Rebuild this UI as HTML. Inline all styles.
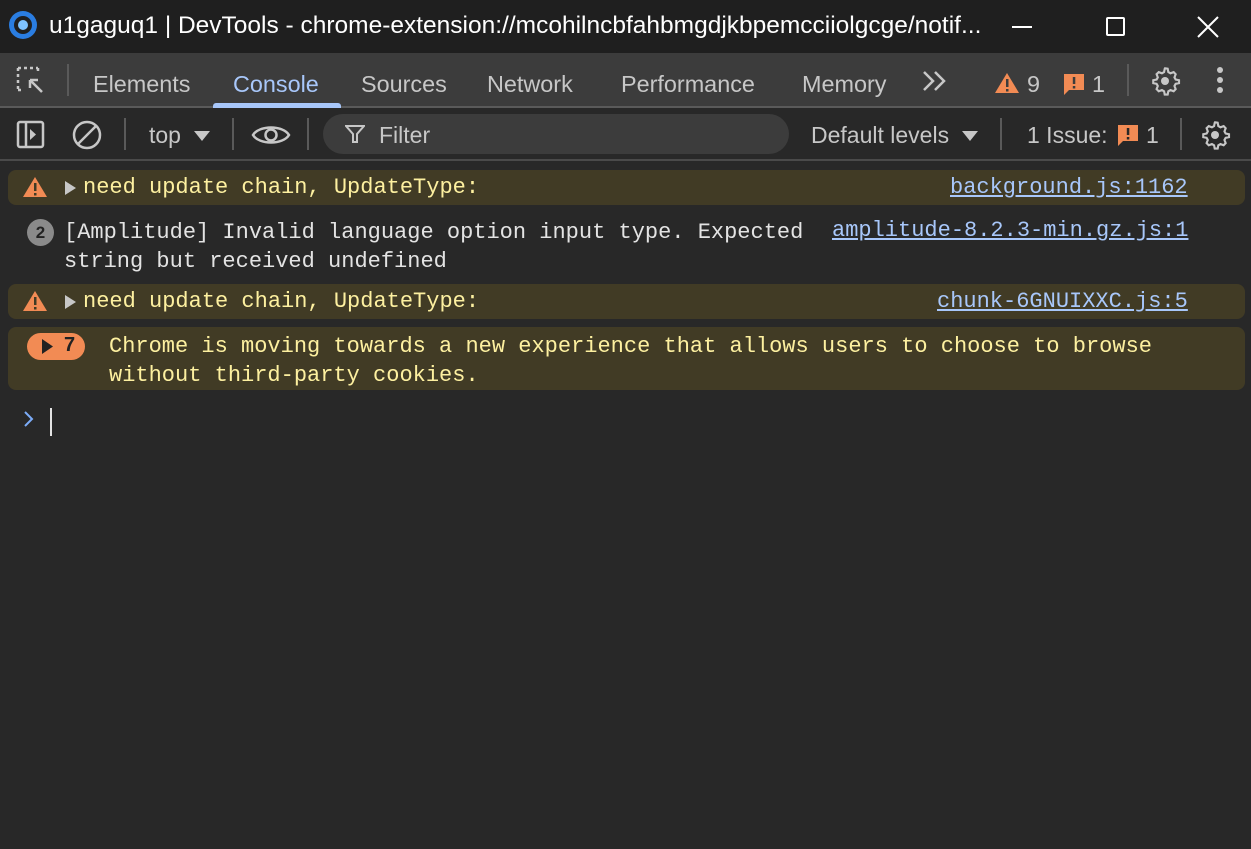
<!DOCTYPE html>
<html><head><style>
*{margin:0;padding:0;box-sizing:border-box}
body{width:1251px;height:849px;background:#282828;font-family:"Liberation Sans",sans-serif;color:#e3e3e3;position:relative;overflow:hidden}
.abs{position:absolute}
.title{top:0;left:0;width:1251px;height:53px;background:#1f1f1f}
.tabs{top:53px;left:0;width:1251px;height:55px;background:#3c3c3c;border-bottom:2px solid #5a5a5a}
.tb{top:108px;left:0;width:1251px;height:53px;background:#282828;border-bottom:2px solid #4a4a4a}
.t{font-size:23.4px;color:#c7c7c7;top:71px}
.mono{font-family:"Liberation Mono",monospace;font-size:22px;white-space:pre}
.row{left:8px;width:1237px;background:#413b25;border-radius:8px}
.y{color:#fdf0a0}
.lnk{color:#a8c7fa;text-decoration:underline;font-family:"Liberation Mono",monospace;font-size:22px}
.sep{width:2px;background:#5a5a5a}
.tt{font-size:23px;color:#c7c7c7;top:122px}
</style></head><body>
<div class="abs title"></div>
<svg class="abs" style="left:8px;top:10px" width="30" height="30" viewBox="0 0 30 30"><circle cx="15" cy="15" r="14" fill="#2a7de1"/><circle cx="15" cy="15" r="9" fill="#1f1f1f"/><circle cx="15" cy="15" r="5" fill="#7fc3ff"/></svg>
<div class="abs" style="left:49px;top:12px;font-size:24.5px;color:#fff;white-space:nowrap">u1gaguq1 | DevTools - chrome-extension://mcohilncbfahbmgdjkbpemcciiolgcge/notif...</div>
<div class="abs" style="left:1012px;top:26px;width:20px;height:2px;background:#fff"></div>
<div class="abs" style="left:1106px;top:17px;width:19px;height:19px;border:2px solid #fff;border-radius:2px"></div>
<svg class="abs" style="left:1197px;top:16px" width="22" height="22"><path d="M1 1L21 21M21 1L1 21" stroke="#fff" stroke-width="2"/></svg>

<div class="abs tabs"></div>
<svg class="abs" style="left:16px;top:66px" width="30" height="30" viewBox="0 0 30 30"><path d="M2 2h20M2 2v22M2 24h6M22 2v6" stroke="#c7c7c7" stroke-width="2.5" stroke-dasharray="3 3" fill="none"/><path d="M14 14l12 12M14 14h8M14 14v8" stroke="#c7c7c7" stroke-width="2.5" fill="none"/></svg>
<div class="abs sep" style="left:67px;top:64px;height:32px"></div>
<div class="abs t" style="left:93px">Elements</div>
<div class="abs t" style="left:233px;color:#a8c7fa">Console</div>
<div class="abs" style="left:213px;top:103px;width:128px;height:5px;background:#a8c7fa;border-radius:3px 3px 0 0"></div>
<div class="abs t" style="left:361px">Sources</div>
<div class="abs t" style="left:487px">Network</div>
<div class="abs t" style="left:621px">Performance</div>
<div class="abs t" style="left:802px">Memory</div>
<svg class="abs" style="left:922px;top:70px" width="26" height="22"><path d="M2 2l9 9-9 9M13 2l9 9-9 9" stroke="#c7c7c7" stroke-width="2.5" fill="none"/></svg>
<svg class="abs" style="left:994px;top:72px" width="26" height="22"><path d="M13 1L25 21H1z" fill="#f28b54"/><rect x="12" y="7" width="2.5" height="8" fill="#3c3c3c"/><rect x="12" y="17" width="2.5" height="2.5" fill="#3c3c3c"/></svg>
<div class="abs t" style="left:1027px">9</div>
<svg class="abs" style="left:1063px;top:73px" width="22" height="22"><path d="M1 1h20v16H6l-5 5z" fill="#f28b54"/><rect x="9.8" y="4" width="2.5" height="7" fill="#3c3c3c"/><rect x="9.8" y="13" width="2.5" height="2.5" fill="#3c3c3c"/></svg>
<div class="abs t" style="left:1092px">1</div>
<div class="abs sep" style="left:1127px;top:64px;height:32px"></div>
<svg class="abs" style="left:1149px;top:65px" width="32" height="32" viewBox="0 0 24 24"><path d="M12 2.5l2 .3.5 2.5 1.6.9 2.4-.9 1.5 1.6-.9 2.4.9 1.6 2.5.5v2.2l-2.5.5-.9 1.6.9 2.4-1.5 1.6-2.4-.9-1.6.9-.5 2.5h-2.2l-.5-2.5-1.6-.9-2.4.9-1.6-1.6.9-2.4-.9-1.6-2.5-.5v-2.2l2.5-.5.9-1.6-.9-2.4 1.6-1.6 2.4.9 1.6-.9.5-2.5z" fill="none" stroke="#c7c7c7" stroke-width="1.6"/><circle cx="12" cy="12" r="3" fill="#c7c7c7"/></svg>
<div class="abs" style="left:1217px;top:67px;width:6px;height:6px;border-radius:3px;background:#c7c7c7;box-shadow:0 10px 0 #c7c7c7,0 20px 0 #c7c7c7"></div>

<div class="abs tb"></div>
<svg class="abs" style="left:16px;top:120px" width="30" height="30"><rect x="2" y="2" width="25" height="25" rx="2" stroke="#c7c7c7" stroke-width="2.5" fill="none"/><path d="M10 2v25" stroke="#c7c7c7" stroke-width="2.5"/><path d="M14 9l6 5.5-6 5.5z" fill="#c7c7c7"/></svg>
<svg class="abs" style="left:71px;top:119px" width="32" height="32"><circle cx="16" cy="16" r="13" stroke="#c7c7c7" stroke-width="2.5" fill="none"/><path d="M7 25L25 7" stroke="#c7c7c7" stroke-width="2.5"/></svg>
<div class="abs sep" style="left:124px;top:118px;height:32px"></div>
<div class="abs tt" style="left:149px">top</div>
<svg class="abs" style="left:193px;top:130px" width="18" height="12"><path d="M1 1h16L9 11z" fill="#c7c7c7"/></svg>
<div class="abs sep" style="left:232px;top:118px;height:32px"></div>
<svg class="abs" style="left:251px;top:120px" width="40" height="30"><path d="M2 15C8 5 32 5 38 15C32 25 8 25 2 15z" stroke="#c7c7c7" stroke-width="2.5" fill="none"/><circle cx="20" cy="15" r="5.5" stroke="#c7c7c7" stroke-width="2.5" fill="none"/></svg>
<div class="abs sep" style="left:307px;top:118px;height:32px"></div>
<div class="abs" style="left:323px;top:114px;width:466px;height:40px;border-radius:20px;background:#3c3c3c"></div>
<svg class="abs" style="left:345px;top:124px" width="20" height="20"><path d="M1 2h18l-7 8v8h-4v-8z" stroke="#c7c7c7" stroke-width="2" fill="none"/></svg>
<div class="abs tt" style="left:379px">Filter</div>
<div class="abs tt" style="left:811px">Default levels</div>
<svg class="abs" style="left:961px;top:130px" width="18" height="12"><path d="M1 1h16L9 11z" fill="#c7c7c7"/></svg>
<div class="abs sep" style="left:1000px;top:118px;height:32px"></div>
<div class="abs tt" style="left:1027px">1 Issue:</div>
<svg class="abs" style="left:1117px;top:124px" width="22" height="22"><path d="M1 1h20v16H6l-5 5z" fill="#f28b54"/><rect x="9.8" y="4" width="2.5" height="7" fill="#282828"/><rect x="9.8" y="13" width="2.5" height="2.5" fill="#282828"/></svg>
<div class="abs tt" style="left:1146px">1</div>
<div class="abs sep" style="left:1180px;top:118px;height:32px"></div>
<svg class="abs" style="left:1199px;top:119px" width="32" height="32" viewBox="0 0 24 24"><path d="M12 2.5l2 .3.5 2.5 1.6.9 2.4-.9 1.5 1.6-.9 2.4.9 1.6 2.5.5v2.2l-2.5.5-.9 1.6.9 2.4-1.5 1.6-2.4-.9-1.6.9-.5 2.5h-2.2l-.5-2.5-1.6-.9-2.4.9-1.6-1.6.9-2.4-.9-1.6-2.5-.5v-2.2l2.5-.5.9-1.6-.9-2.4 1.6-1.6 2.4.9 1.6-.9.5-2.5z" fill="none" stroke="#c7c7c7" stroke-width="1.6"/><circle cx="12" cy="12" r="3" fill="#c7c7c7"/></svg>

<div class="abs row" style="top:170px;height:35px"></div>
<svg class="abs" style="left:22px;top:176px" width="26" height="22"><path d="M13 1L25 21H1z" fill="#f28b54"/><rect x="12" y="7" width="2.5" height="8" fill="#413b25"/><rect x="12" y="17" width="2.5" height="2.5" fill="#413b25"/></svg>
<svg class="abs" style="left:65px;top:181px" width="12" height="14"><path d="M0 0l11 7-11 7z" fill="#c7c7c7"/></svg>
<div class="abs mono y" style="left:83px;top:175px">need update chain, UpdateType:</div>
<div class="abs lnk" style="left:950px;top:175px">background.js:1162</div>

<div class="abs" style="left:27px;top:219px;width:27px;height:27px;border-radius:50%;background:#8a8a8a;color:#222;font-size:17px;font-weight:bold;text-align:center;line-height:27px">2</div>
<div class="abs mono" style="left:64px;top:218px;line-height:29px;color:#e3e3e3">[Amplitude] Invalid language option input type. Expected
string but received undefined</div>
<div class="abs lnk" style="left:832px;top:218px">amplitude-8.2.3-min.gz.js:1</div>

<div class="abs row" style="top:284px;height:35px"></div>
<svg class="abs" style="left:22px;top:290px" width="26" height="22"><path d="M13 1L25 21H1z" fill="#f28b54"/><rect x="12" y="7" width="2.5" height="8" fill="#413b25"/><rect x="12" y="17" width="2.5" height="2.5" fill="#413b25"/></svg>
<svg class="abs" style="left:65px;top:295px" width="12" height="14"><path d="M0 0l11 7-11 7z" fill="#c7c7c7"/></svg>
<div class="abs mono y" style="left:83px;top:289px">need update chain, UpdateType:</div>
<div class="abs lnk" style="left:937px;top:289px">chunk-6GNUIXXC.js:5</div>

<div class="abs row" style="top:327px;height:63px"></div>
<div class="abs" style="left:27px;top:333px;width:58px;height:27px;border-radius:14px;background:#f28b54"></div>
<svg class="abs" style="left:42px;top:339px" width="12" height="15"><path d="M0 0l11 7.5-11 7.5z" fill="#222"/></svg>
<div class="abs" style="left:64px;top:334px;font-size:20px;font-weight:bold;color:#222">7</div>
<div class="abs mono y" style="left:109px;top:332px;line-height:29px">Chrome is moving towards a new experience that allows users to choose to browse
without third-party cookies.</div>

<svg class="abs" style="left:23px;top:410px" width="12" height="18"><path d="M2 2l7 7-7 7" stroke="#7cacf8" stroke-width="2" fill="none"/></svg>
<div class="abs" style="left:50px;top:408px;width:2px;height:28px;background:#e3e3e3"></div>
</body></html>
